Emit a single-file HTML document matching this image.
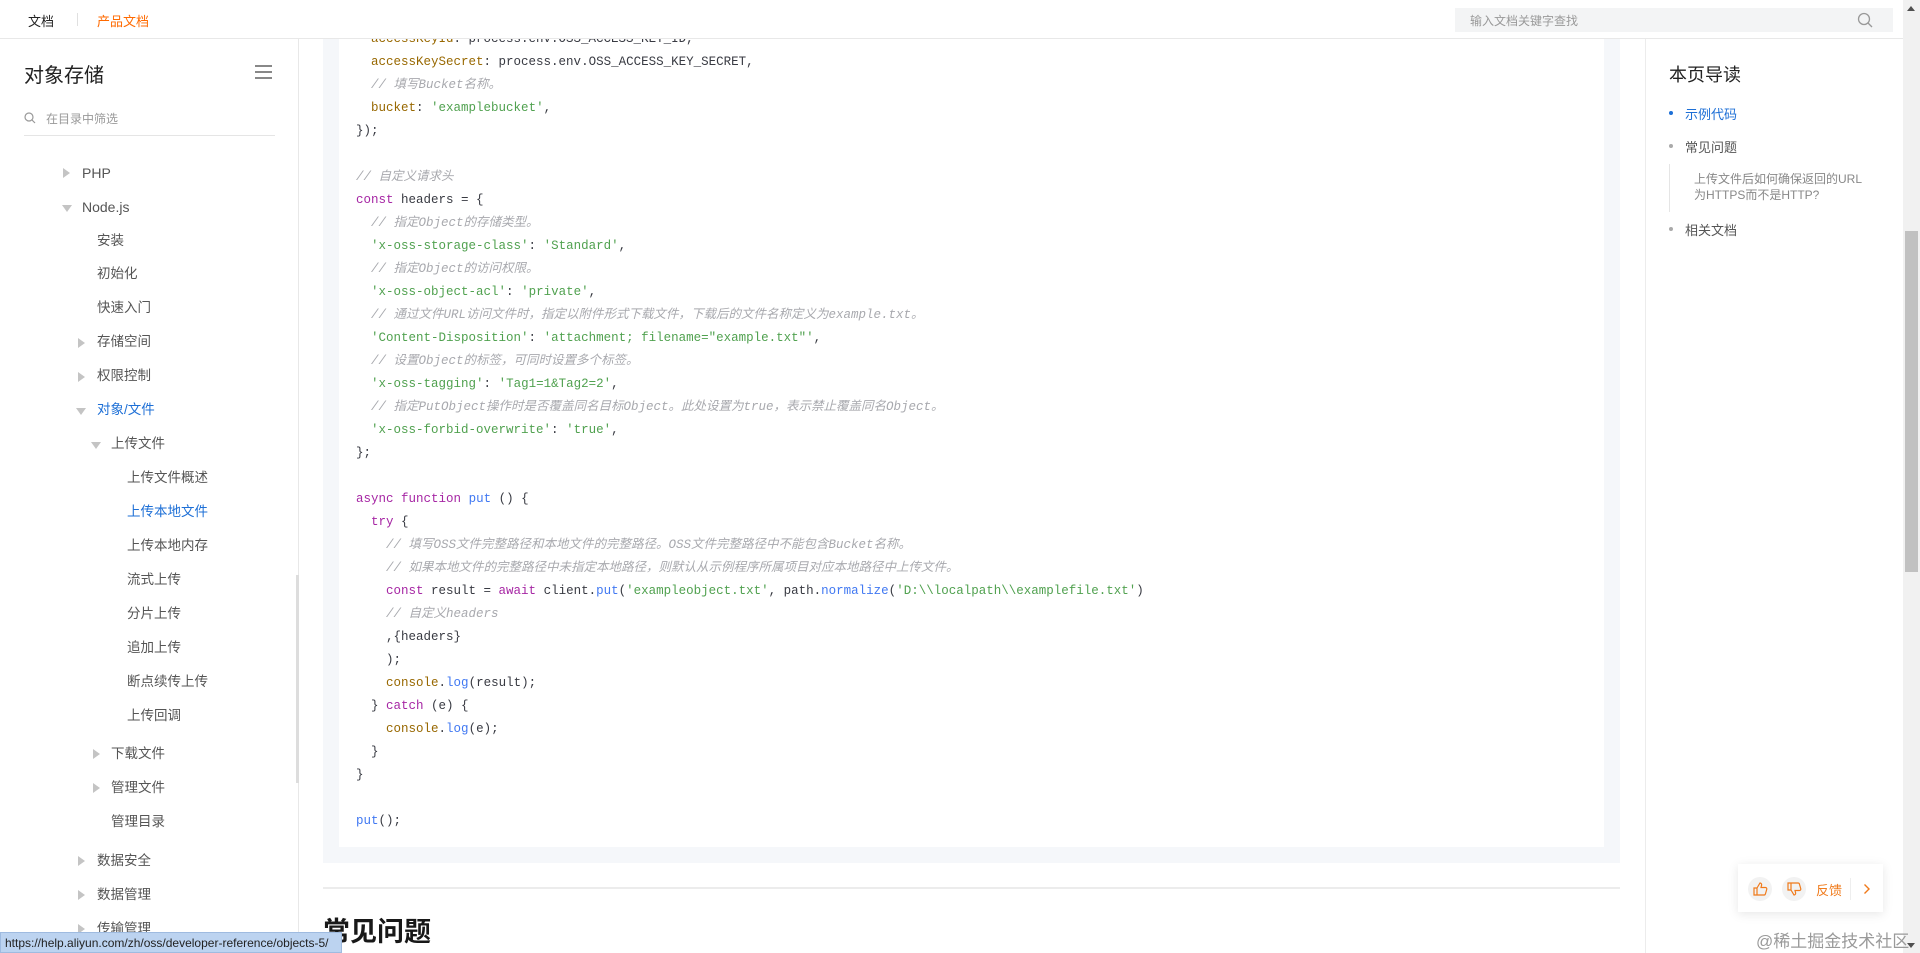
<!DOCTYPE html>
<html><head><meta charset="utf-8"><style>
*{margin:0;padding:0;box-sizing:border-box}
body{width:1920px;height:953px;overflow:hidden;background:#fff;font-family:"Liberation Sans","Noto Sans CJK SC",sans-serif;position:relative;color:#333}
.a{position:absolute;white-space:nowrap}
.hdr{position:absolute;left:0;top:0;width:1903px;height:39px;border-bottom:1px solid #e8e8e8;background:#fff;z-index:5}
.side{position:absolute;left:0;top:39px;width:299px;height:914px;border-right:1px solid #e8e8e8}
.tree{font-size:13.5px;color:#555;line-height:18px}
.tri{position:absolute;width:0;height:0;border-top:5px solid transparent;border-bottom:5px solid transparent;border-left:7px solid #c4c4c4}
.trd{position:absolute;width:0;height:0;border-left:5px solid transparent;border-right:5px solid transparent;border-top:7px solid #c4c4c4}
.code{position:absolute;left:356px;top:28px;font-family:"Liberation Mono","Noto Sans CJK SC",monospace;font-size:12.5px;line-height:23px;color:#383a42;white-space:pre}
.c{color:#a8a9ae;font-style:italic}.s{color:#50a14f}.k{color:#a626a4}.p{color:#986801}.f{color:#4078f2}
</style></head><body>
<!-- code panel -->
<div class="a" style="left:323px;top:39px;width:1297px;height:824px;background:#f5f7fa"></div>
<div class="a" style="left:339px;top:39px;width:1265px;height:808px;background:#fff"></div>
<div class="code">  <span class="p">accessKeyId</span>: process.env.OSS_ACCESS_KEY_ID,
  <span class="p">accessKeySecret</span>: process.env.OSS_ACCESS_KEY_SECRET,
  <span class="c">// 填写Bucket名称。</span>
  <span class="p">bucket</span>: <span class="s">'examplebucket'</span>,
});

<span class="c">// 自定义请求头</span>
<span class="k">const</span> headers = {
  <span class="c">// 指定Object的存储类型。</span>
  <span class="s">'x-oss-storage-class'</span>: <span class="s">'Standard'</span>,
  <span class="c">// 指定Object的访问权限。</span>
  <span class="s">'x-oss-object-acl'</span>: <span class="s">'private'</span>,
  <span class="c">// 通过文件URL访问文件时，指定以附件形式下载文件，下载后的文件名称定义为example.txt。</span>
  <span class="s">'Content-Disposition'</span>: <span class="s">'attachment; filename="example.txt"'</span>,
  <span class="c">// 设置Object的标签，可同时设置多个标签。</span>
  <span class="s">'x-oss-tagging'</span>: <span class="s">'Tag1=1&amp;Tag2=2'</span>,
  <span class="c">// 指定PutObject操作时是否覆盖同名目标Object。此处设置为true，表示禁止覆盖同名Object。</span>
  <span class="s">'x-oss-forbid-overwrite'</span>: <span class="s">'true'</span>,
};

<span class="k">async</span> <span class="k">function</span> <span class="f">put</span> () {
  <span class="k">try</span> {
    <span class="c">// 填写OSS文件完整路径和本地文件的完整路径。OSS文件完整路径中不能包含Bucket名称。</span>
    <span class="c">// 如果本地文件的完整路径中未指定本地路径，则默认从示例程序所属项目对应本地路径中上传文件。</span>
    <span class="k">const</span> result = <span class="k">await</span> client.<span class="f">put</span>(<span class="s">'exampleobject.txt'</span>, path.<span class="f">normalize</span>(<span class="s">'D:\\localpath\\examplefile.txt'</span>)
    <span class="c">// 自定义headers</span>
    ,{headers}
    );
    <span class="p">console</span>.<span class="f">log</span>(result);
  } <span class="k">catch</span> (e) {
    <span class="p">console</span>.<span class="f">log</span>(e);
  }
}

<span class="f">put</span>();</div>
<div class="a" style="left:323px;top:887px;width:1297px;height:2px;background:#ececec"></div>
<div class="a" style="left:323px;top:910px;font-size:27px;font-weight:bold;color:#181818">常见问题</div>

<!-- header -->
<div class="hdr">
<div class="a" style="left:28px;top:11px;font-size:13px;color:#222">文档</div>
<div class="a" style="left:77px;top:13px;width:1px;height:13px;background:#e0e0e0"></div>
<div class="a" style="left:97px;top:11px;font-size:13px;color:#ff6a00">产品文档</div>
<div class="a" style="left:1455px;top:8px;width:438px;height:24px;background:#f3f4f5"></div>
<div class="a" style="left:1470px;top:12px;font-size:12px;color:#999">输入文档关键字查找</div>
<svg class="a" style="left:1857px;top:12px" width="16" height="16"><circle cx="7" cy="7" r="5.5" fill="none" stroke="#999" stroke-width="1.3"/><line x1="11" y1="11" x2="15" y2="15" stroke="#999" stroke-width="1.3"/></svg>
</div>

<!-- sidebar -->
<div class="side">
<div class="a" style="left:24px;top:20px;font-size:20px;color:#222">对象存储</div>
<div class="a" style="left:255px;top:26px;width:17px;height:2px;background:#888"></div>
<div class="a" style="left:255px;top:32px;width:17px;height:2px;background:#888"></div>
<div class="a" style="left:255px;top:38px;width:17px;height:2px;background:#888"></div>
<svg class="a" style="left:24px;top:73px" width="12" height="12"><circle cx="5" cy="5" r="4" fill="none" stroke="#999" stroke-width="1.2"/><line x1="8" y1="8" x2="11" y2="11" stroke="#999" stroke-width="1.2"/></svg>
<div class="a" style="left:46px;top:71px;font-size:12px;color:#999">在目录中筛选</div>
<div class="a" style="left:24px;top:96px;width:251px;height:1px;background:#e5e5e5"></div>
<div class="a" style="left:296px;top:536px;width:3px;height:208px;background:#ddd"></div>
</div>
<div class="tree">
<div class="tri" style="left:63px;top:168px"></div><div class="a" style="left:82px;top:164px;font-size:14px">PHP</div>
<div class="trd" style="left:62px;top:205px"></div><div class="a" style="left:82px;top:198px;font-size:14px">Node.js</div>
<div class="a" style="left:97px;top:232px">安装</div>
<div class="a" style="left:97px;top:265px">初始化</div>
<div class="a" style="left:97px;top:299px">快速入门</div>
<div class="tri" style="left:78px;top:338px"></div><div class="a" style="left:97px;top:333px">存储空间</div>
<div class="tri" style="left:78px;top:372px"></div><div class="a" style="left:97px;top:367px">权限控制</div>
<div class="trd" style="left:76px;top:408px"></div><div class="a" style="left:97px;top:401px;color:#1d6fd6">对象/文件</div>
<div class="trd" style="left:91px;top:442px"></div><div class="a" style="left:111px;top:435px">上传文件</div>
<div class="a" style="left:127px;top:469px">上传文件概述</div>
<div class="a" style="left:127px;top:503px;color:#1d6fd6">上传本地文件</div>
<div class="a" style="left:127px;top:537px">上传本地内存</div>
<div class="a" style="left:127px;top:571px">流式上传</div>
<div class="a" style="left:127px;top:605px">分片上传</div>
<div class="a" style="left:127px;top:639px">追加上传</div>
<div class="a" style="left:127px;top:673px">断点续传上传</div>
<div class="a" style="left:127px;top:707px">上传回调</div>
<div class="tri" style="left:93px;top:749px"></div><div class="a" style="left:111px;top:745px">下载文件</div>
<div class="tri" style="left:93px;top:783px"></div><div class="a" style="left:111px;top:779px">管理文件</div>
<div class="a" style="left:111px;top:813px">管理目录</div>
<div class="tri" style="left:78px;top:856px"></div><div class="a" style="left:97px;top:852px">数据安全</div>
<div class="tri" style="left:78px;top:890px"></div><div class="a" style="left:97px;top:886px">数据管理</div>
<div class="tri" style="left:78px;top:924px"></div><div class="a" style="left:97px;top:920px">传输管理</div>
</div>
<div class="a" style="left:0;top:932px;width:342px;height:21px;background:#bcd3f0;border:1px solid #9fbbe0;font-size:12px;color:#222;padding:3px 0 0 4px">https://help.aliyun.com/zh/oss/developer-reference/objects-5/</div>

<!-- toc -->
<div class="a" style="left:1645px;top:39px;width:1px;height:914px;background:#ececec"></div>
<div class="a" style="left:1669px;top:61px;font-size:18px;color:#222">本页导读</div>
<div class="a" style="left:1669px;top:111px;width:4px;height:4px;border-radius:2px;background:#1d6fd6"></div>
<div class="a" style="left:1685px;top:104px;font-size:13px;color:#1d6fd6">示例代码</div>
<div class="a" style="left:1669px;top:144px;width:4px;height:4px;border-radius:2px;background:#aaa"></div>
<div class="a" style="left:1685px;top:137px;font-size:13px;color:#555">常见问题</div>
<div class="a" style="left:1669px;top:164px;width:1px;height:48px;background:#e5e5e5"></div>
<div class="a" style="left:1694px;top:171px;font-size:12px;color:#888;line-height:16px">上传文件后如何确保返回的URL<br>为HTTPS而不是HTTP?</div>
<div class="a" style="left:1669px;top:227px;width:4px;height:4px;border-radius:2px;background:#aaa"></div>
<div class="a" style="left:1685px;top:220px;font-size:13px;color:#555">相关文档</div>

<!-- scrollbar -->
<div class="a" style="left:1903px;top:0;width:17px;height:953px;background:#f1f1f1"></div>
<div class="a" style="left:1905px;top:231px;width:13px;height:341px;background:#c1c1c1"></div>
<div class="a" style="left:1907px;top:6px;width:0;height:0;border-left:4px solid transparent;border-right:4px solid transparent;border-bottom:5px solid #505050"></div>
<div class="a" style="left:1907px;top:943px;width:0;height:0;border-left:4px solid transparent;border-right:4px solid transparent;border-top:5px solid #505050"></div>

<!-- feedback -->
<div class="a" style="left:1738px;top:864px;width:145px;height:48px;background:#fff;box-shadow:0 2px 10px rgba(0,0,0,.1)"></div>
<div class="a" style="left:1748px;top:877px;width:24px;height:24px;border-radius:12px;background:#f2f2f2"></div>
<svg class="a" style="left:1752px;top:881px" width="16" height="16"><path d="M2 7h3v7H2zM5 7l3-5c1 0 2 1 1.5 2.5L9 6.5h4.5c1 0 1.5 1 1.2 2l-1.3 4.5c-.2.6-.7 1-1.3 1H5" fill="none" stroke="#f07a1a" stroke-width="1.2"/></svg>
<div class="a" style="left:1782px;top:877px;width:24px;height:24px;border-radius:12px;background:#f2f2f2"></div>
<svg class="a" style="left:1786px;top:881px" width="16" height="16"><path d="M2 2h3v7H2zM5 9l3 5c1 0 2-1 1.5-2.5L9 9.5h4.5c1 0 1.5-1 1.2-2L13.4 3c-.2-.6-.7-1-1.3-1H5" fill="none" stroke="#f07a1a" stroke-width="1.2"/></svg>
<div class="a" style="left:1816px;top:880px;font-size:13px;color:#f07a1a">反馈</div>
<div class="a" style="left:1850px;top:878px;width:1px;height:22px;background:#eee"></div>
<svg class="a" style="left:1863px;top:883px" width="8" height="12"><path d="M1.5 1.5l4.5 4.5-4.5 4.5" fill="none" stroke="#f07a1a" stroke-width="1.4"/></svg>
<div class="a" style="left:1756px;top:927px;font-size:17px;color:#9a9a9a">@稀土掘金技术社区</div>
</body></html>
